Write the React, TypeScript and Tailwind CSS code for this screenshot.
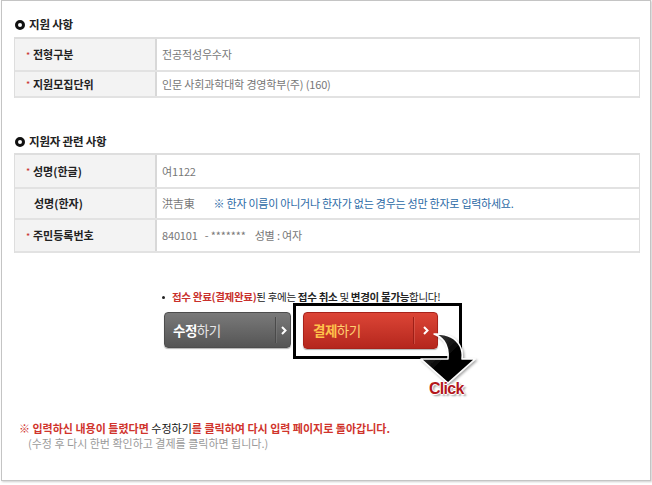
import React from 'react';

type Row = {
    label: string;
    required: boolean;
    height: string;
    value: React.ReactNode;
};

const applyInfo: Row[] = [
    { label: "전형구분", required: true, height: "h-[33px]", value: "전공적성우수자" },
    { label: "지원모집단위", required: true, height: "h-[26px]", value: "인문 사회과학대학 경영학부(주) (160)" },
];

const applicantInfo: Row[] = [
    { label: "성명(한글)", required: true, height: "h-[34px]", value: "여1122" },
    {
        label: "성명(한자)",
        required: false,
        height: "h-[31px]",
        value: (
            <>
                <span>洪吉東</span>
                <span className="ml-[19px] text-[#2b6aa6] tracking-[-0.25px]">※ 한자 이름이 아니거나 한자가 없는 경우는 성만 한자로 입력하세요.</span>
            </>
        ),
    },
    {
        label: "주민등록번호",
        required: true,
        height: "h-[33px]",
        value: (
            <>
                <span>840101</span>
                <span className="ml-[7px]">- *******</span>
                <span className="ml-[9px]">성별 : 여자</span>
            </>
        ),
    },
];

const SectionTitle: React.FC<{ title: string; className?: string }> = ({ title, className }) => (
    <div className={"flex items-center h-[16px] pl-[1px] " + (className ?? "")}>
        <span className="w-[10px] h-[10px] rounded-full border-[3px] border-[#111] mr-[4px]" />
        <span className="text-[11.5px] font-bold text-[#222] tracking-[-0.2px]">{title}</span>
    </div>
);

const InfoTable: React.FC<{ rows: Row[] }> = ({ rows }) => (
    <div className="w-[626px] border-t-2 border-[#555] border-l border-r border-[#dedede]">
        {rows.map((row) => (
            <div key={row.label} className={"flex border-b-2 border-[#e2e2e2] " + row.height}>
                <div className="w-[142px] shrink-0 bg-[#f3f3f3] border-r-2 border-[#d8d8d8] flex items-center pl-[11px]">
                    {row.required ? (
                        <span className="text-[#c9302c] text-[9px] w-[7px] mt-[2px]">*</span>
                    ) : (
                        <span className="w-[8px]" />
                    )}
                    <span className="text-[11px] font-bold text-[#222]">{row.label}</span>
                </div>
                <div className="flex items-center pl-[5px] text-[11px] text-[#777] tracking-[-0.15px]">{row.value}</div>
            </div>
        ))}
    </div>
);

const ChevronRight: React.FC = () => (
    <svg width="6" height="9" viewBox="0 0 6 9" className="block">
        <path d="M1 1 L4.5 4.5 L1 8" fill="none" stroke="#fff" strokeWidth="2" />
    </svg>
);

const ClickArrow: React.FC = () => (
    <svg className="absolute left-[405px] top-[325px]" width="75" height="62" viewBox="0 0 75 62">
        <defs>
            <filter id="sh" x="-20%" y="-20%" width="140%" height="140%">
                <feDropShadow dx="1.5" dy="1.5" stdDeviation="1" floodColor="#000" floodOpacity="0.35" />
            </filter>
            <linearGradient id="ag" x1="0" y1="0" x2="1" y2="1">
                <stop offset="0" stopColor="#555" />
                <stop offset="0.5" stopColor="#000" />
                <stop offset="1" stopColor="#000" />
            </linearGradient>
        </defs>
        <path
            d="M27 8 Q46 7 53 20 Q56 26 55 33 L68 33 L41 57 L14 33 L41 33 Q42 22 37 15 Q33 10 27 8 Z"
            fill="url(#ag)"
            stroke="#fff"
            strokeWidth="1.5"
            strokeLinejoin="round"
            filter="url(#sh)"
        />
    </svg>
);

const App: React.FC = () => {
    return (
        <div className="w-[652px] h-[485px] bg-white font-['Noto_Sans_CJK_KR','Noto_Sans',sans-serif]">
            <div className="relative w-[650px] h-[481px] ml-[1px] border border-[#c4c4c4] shadow-[1px_1px_2px_rgba(0,0,0,0.2)] bg-white">
                <div className="pl-[12px]">
                    <SectionTitle title="지원 사항" className="mt-[16px] mb-[4px]" />
                    <InfoTable rows={applyInfo} />

                    <SectionTitle title="지원자 관련 사항" className="mt-[36px] mb-[3px]" />
                    <InfoTable rows={applicantInfo} />
                </div>

                <div className="ml-[160px] mt-[37px]">
                    <div className="flex items-center h-[14px] text-[10.5px] text-[#222] tracking-[-0.3px]">
                        <span className="w-[3px] h-[3px] rounded-full bg-[#222] mr-[7px]" />
                        <span className="font-bold text-[#c9302c]">접수 완료(결제완료)</span>
                        <span>된 후에는&nbsp;</span>
                        <span className="font-bold">접수 취소</span>
                        <span>&nbsp;및&nbsp;</span>
                        <span className="font-bold">변경이 불가능</span>
                        <span>합니다!</span>
                    </div>

                    <div className="flex mt-[8px] ml-[2px]">
                        <button className="w-[127px] h-[36px] rounded-[4px] bg-gradient-to-b from-[#7a7a7a] to-[#555] border border-[#4d4d4d] flex items-center shadow-[0_1px_1px_rgba(0,0,0,0.3)]">
                            <span className="ml-[8px] text-[13.5px] tracking-[-0.5px] text-white">
                                <b>수정</b><span className="text-[#e6e6e6]">하기</span>
                            </span>
                            <span className="ml-auto h-[26px] w-[2px] border-l border-[#4a4a4a] bg-[#888]/40" />
                            <span className="w-[13px] flex justify-center"><ChevronRight /></span>
                        </button>
                        <button className="ml-[12px] w-[135px] h-[37px] rounded-[4px] bg-gradient-to-b from-[#dc4536] to-[#b5261d] border border-[#a8221a] flex items-center shadow-[0_1px_1px_rgba(0,0,0,0.3)]">
                            <span className="ml-[9px] text-[13.5px] tracking-[-0.5px]">
                                <b className="text-[#ffc24a]">결제</b><span className="text-[#ffcf70]">하기</span>
                            </span>
                            <span className="ml-auto h-[27px] w-[2px] border-l border-[#9e1f17] bg-[#e06a5d]/50" />
                            <span className="w-[22px] flex justify-center"><ChevronRight /></span>
                        </button>
                    </div>
                </div>

                <div className="absolute left-[291px] top-[302px] w-[169px] h-[56px] border-[3px] border-black" />
                <ClickArrow />
                <span className="absolute left-[427px] top-[379px] text-[16px] leading-[18px] font-bold tracking-[-0.7px] text-[#b3161b] font-['Liberation_Sans',sans-serif] [text-shadow:1px_0_0_#fff,-1px_0_0_#fff,0_1px_0_#fff,0_-1px_0_#fff,2px_2px_2px_rgba(0,0,0,0.4)]">
                    Click
                </span>

                <div className="mt-[72px] ml-[17px] text-[11px]">
                    <div className="font-bold text-[#d0342c] h-[15px] leading-[15px]">
                        ※ 입력하신 내용이 틀렸다면 <span className="text-[#111] font-normal">수정하기</span>를 클릭하여 다시 입력 페이지로 돌아갑니다.
                    </div>
                    <div className="ml-[9px] text-[#9a9a9a] h-[15px] leading-[15px]">
                        (수정 후 다시 한번 확인하고 결제를 클릭하면 됩니다.)
                    </div>
                </div>
            </div>
        </div>
    );
};

export default App;
